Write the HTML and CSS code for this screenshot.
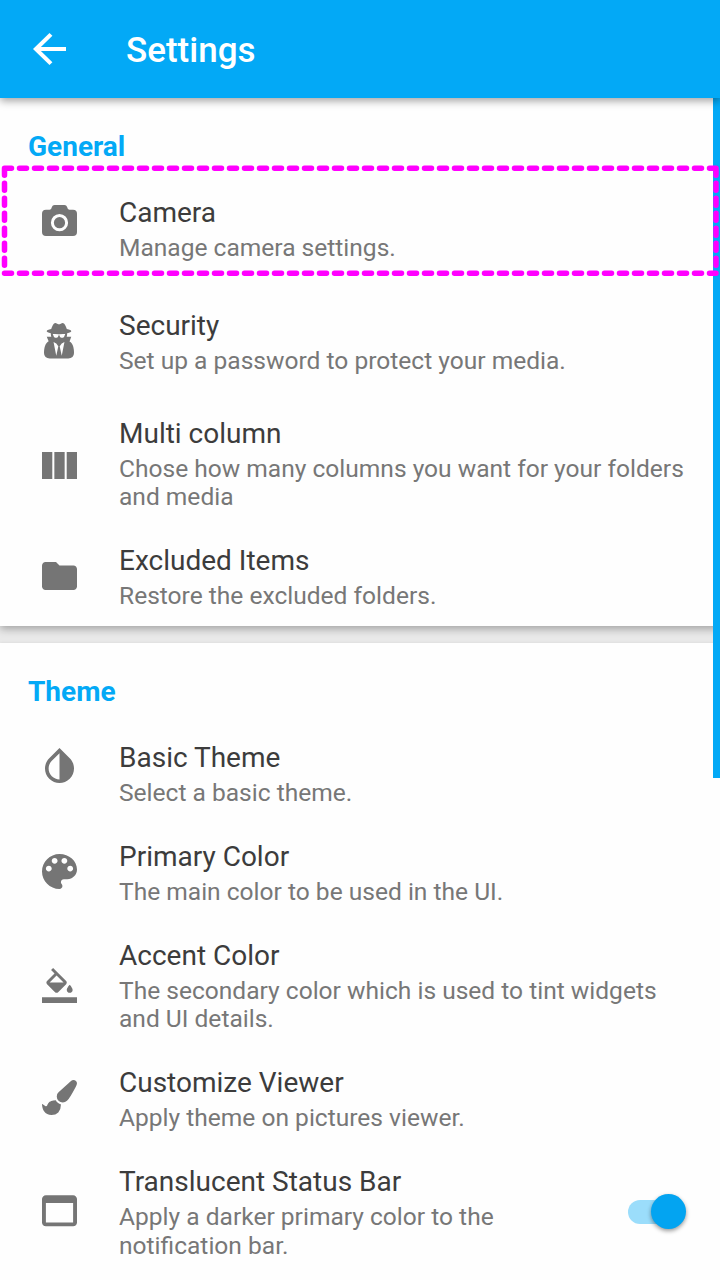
FILE: index.html
```html
<!DOCTYPE html>
<html lang="en">
<head>
<meta charset="utf-8">
<title>Settings</title>
<link rel="stylesheet" href="styles.css">
</head>
<body>
<div class="screen">
  <header class="app-bar">
    <svg class="back" width="33" height="32" viewBox="4 4 16 16" preserveAspectRatio="none"><path d="M20 11H7.83l5.59-5.59L12 4l-8 8 8 8 1.41-1.41L7.83 13H20v-2z"/></svg>
    <h1 class="app-title">Settings</h1>
  </header>
  <main class="content">
    <section class="card card-general">
      <h2 class="heading">General</h2>
      <div class="row row-camera">
        <div class="icon"><svg class="i-camera" width="35" height="31" viewBox="0 0 35 31"><path fill-rule="evenodd" d="M4 4.700h3.600c.9 0 1.400-.3 1.700-1.100l.6-1.600C10.400.7 11.200 0 12.600 0h9.800c1.400 0 2.200.7 2.700 2l.6 1.600c.3.8.8 1.100 1.700 1.100H31a4 4 0 0 1 4 4V27a4 4 0 0 1-4 4H4a4 4 0 0 1-4-4V8.700a4 4 0 0 1 4-4zM17.500 9.100a8.600 8.600 0 1 0 0 17.200 8.600 8.600 0 1 0 0-17.200z"/><circle cx="17.500" cy="17.700" r="5.600"/></svg></div>
        <div class="text"><div class="title">Camera</div><div class="sub">Manage camera settings.</div></div>
      </div>
      <div class="row row-security">
        <div class="icon"><svg class="i-spy" width="30" height="35.500" viewBox="0 0 1408 1664"><path fill-rule="evenodd" d="M576 1536l96-448-96-128-128-64zM832 1536l128-640-128 64-96 128zM992 526q-2-4-4-6-10-8-96-8-70 0-167 19-7 2-21 2t-21-2q-97-19-167-19-86 0-96 8-2 2-4 6 2 18 4 27 2 3 7.500 6.500t7.500 10.500q2 4 7.500 20.500t7 20.500 7.500 17 8.500 17 9 14 12 13.500 14 9.500 17.500 8 20.500 4 24.500 2q36 0 59-12.500t32.500-30 14.500-34.500 11.500-29.500 17.500-12.500h12q11 0 17.500 12.500t11.500 29.500 14.500 34.500 32.500 30 59 12.500q13 0 24.500-2t20.500-4 17.500-8 14-9.500 12-13.500 9-14 8.500-17 7.500-17 7-20.500 7.500-20.500q2-7 7.500-10.500t7.500-6.500q2-9 4-27zM1408 1405q0 121-73 190t-194 69h-874q-121 0-194-69t-73-190q0-61 4.500-118t19-125.500 37.500-123.500 63.500-103.500 93.500-74.500l-90-220h214q-22-64-22-128 0-12 2-32-194-40-194-96 0-57 210-99 17-62 51.500-134t70.500-114q32-37 76-37 30 0 84 31t84 31 84-31 84-31q44 0 76 37 36 42 70.500 114t51.500 134q210 42 210 99 0 56-194 96 7 81-20 160h214l-82 225q63 33 107.500 96.500t65.500 143.500 29 151.500 8 157.500z"/></svg></div>
        <div class="text"><div class="title">Security</div><div class="sub">Set up a password to protect your media.</div></div>
      </div>
      <div class="row">
        <div class="icon"><svg class="i-columns" width="35" height="27" viewBox="4 5 17 13"><path d="M10 18h5V5h-5v13zm-6 0h5V5H4v13zM16 5v13h5V5h-5z"/></svg></div>
        <div class="text"><div class="title">Multi column</div><div class="sub">Chose how many columns you want for your folders<br>and media</div></div>
      </div>
      <div class="row">
        <div class="icon"><svg class="i-folder" width="35" height="28" viewBox="2 4 20 16"><path d="M10 4H4c-1.100 0-1.990.9-1.990 2L2 18c0 1.100.9 2 2 2h16c1.100 0 2-.9 2-2V8c0-1.100-.9-2-2-2h-8l-2-2z"/></svg></div>
        <div class="text"><div class="title">Excluded Items</div><div class="sub">Restore the excluded folders.</div></div>
      </div>
    </section>
    <section class="card card-theme">
      <h2 class="heading">Theme</h2>
      <div class="row">
        <div class="icon"><svg class="i-invert" width="29" height="35" viewBox="4 2.270 16 19.310"><path d="M17.660 7.930L12 2.270 6.340 7.930c-3.120 3.120-3.120 8.190 0 11.310C7.900 20.800 9.950 21.580 12 21.580c2.050 0 4.100-.78 5.660-2.340 3.120-3.120 3.120-8.190 0-11.310zM12 19.590c-1.600 0-3.110-.62-4.240-1.760C6.620 16.690 6 15.190 6 13.590s.62-3.110 1.760-4.240L12 5.100v14.490z"/></svg></div>
        <div class="text"><div class="title">Basic Theme</div><div class="sub">Select a basic theme.</div></div>
      </div>
      <div class="row">
        <div class="icon"><svg class="i-palette" width="35" height="35" viewBox="3 3 18 18"><path d="M12 3c-4.970 0-9 4.030-9 9s4.030 9 9 9c.83 0 1.500-.67 1.500-1.500 0-.39-.15-.74-.39-1.010-.23-.26-.38-.61-.38-.99 0-.83.67-1.500 1.500-1.500H16c2.760 0 5-2.240 5-5 0-4.420-4.030-8-9-8zm-5.500 9c-.83 0-1.500-.67-1.500-1.500S5.670 9 6.500 9 8 9.670 8 10.500 7.330 12 6.500 12zm3-4C8.670 8 8 7.330 8 6.500S8.670 5 9.500 5s1.500.67 1.500 1.500S10.330 8 9.500 8zm5 0c-.83 0-1.500-.67-1.500-1.500S13.670 5 14.500 5s1.500.67 1.500 1.500S15.330 8 14.500 8zm3 4c-.83 0-1.500-.67-1.500-1.500S16.670 9 17.500 9s1.500.67 1.500 1.500-.67 1.500-1.500 1.500z"/></svg></div>
        <div class="text"><div class="title">Primary Color</div><div class="sub">The main color to be used in the UI.</div></div>
      </div>
      <div class="row">
        <div class="icon"><svg class="i-fill" width="35" height="35" viewBox="0 0 24 24"><path d="M16.560 8.940L7.620 0 6.210 1.410l2.380 2.380-5.150 5.150c-.59.59-.59 1.540 0 2.120l5.500 5.500c.29.29.68.44 1.060.44s.77-.15 1.060-.44l5.500-5.500c.59-.58.59-1.530 0-2.120zM5.210 10L10 5.210 14.790 10H5.210zM19 11.500s-2 2.170-2 3.500c0 1.100.9 2 2 2s2-.9 2-2c0-1.330-2-3.500-2-3.500zM0 20h24v4H0v-4z"/></svg></div>
        <div class="text"><div class="title">Accent Color</div><div class="sub">The secondary color which is used to tint widgets<br>and UI details.</div></div>
      </div>
      <div class="row">
        <div class="icon"><svg class="i-brush" width="35" height="35" viewBox="0 0 1792 1792"><path d="M1615 0q70 0 122.500 46.500t52.500 116.500q0 63-45 151-332 629-465 752-97 91-218 91-126 0-216.500-92.500t-90.500-219.500q0-128 92-212l638-579q59-54 130-54zM706 1034q39 76 106.500 130t150.500 76l1 71q4 213-129.500 347t-348.500 134q-123 0-218-46.500t-152.500-127.500-86.500-183-29-220q7 5 41 30t62 44.500 59 36.500 46 17q41 0 55-37 25-66 57.500-112.500t69.500-76 88-47.500 103-25.500 125-10.500z"/></svg></div>
        <div class="text"><div class="title">Customize Viewer</div><div class="sub">Apply theme on pictures viewer.</div></div>
      </div>
      <div class="row">
        <div class="icon"><svg class="i-window" width="35" height="31.500" viewBox="3 4 18 16"><path d="M19 4H5c-1.110 0-2 .9-2 2v12c0 1.100.89 2 2 2h14c1.100 0 2-.9 2-2V6c0-1.100-.89-2-2-2zm0 14H5V8h14v10z"/></svg></div>
        <div class="text"><div class="title">Translucent Status Bar</div><div class="sub">Apply a darker primary color to the<br>notification bar.</div></div>
        <div class="switch"><div class="thumb"></div></div>
      </div>
    </section>
    <div class="scrollbar"></div>
  </main>
  <svg class="highlight" width="720" height="115" viewBox="0 0 720 115"><path d="M4.500 5.300H716M4.500 110.300H716M4.500 5.300V110.300M716 5.300V110.300"/></svg>
</div>
</body>
</html>
```
FILE: styles.css
```css
* { box-sizing: border-box; }
body {
  margin: 0;
  background: #e9e9e9;
  font-family: Roboto, "Liberation Sans", sans-serif;
}
h1, h2 { margin: 0; }
.screen {
  position: relative;
  width: 720px;
  height: 1280px;
  overflow: hidden;
}
.app-bar {
  position: relative;
  z-index: 2;
  display: flex;
  align-items: center;
  height: 98px;
  padding-left: 33px;
  background: #03a9f6;
  box-shadow: 0 3px 8px rgba(0, 0, 0, .36);
}
.back { fill: #fff; }
.app-title {
  margin-left: 60px;
  padding-top: 3px;
  font-size: 35px;
  line-height: 40px;
  font-weight: 500;
  color: #fff;
}
.content { position: relative; }
.card {
  background: #fefefe;
  padding-top: 32px;
}
.card-general {
  position: relative;
  height: 528px;
  box-shadow: 0 3px 8px rgba(0, 0, 0, .3);
}
.card-theme {
  margin-top: 17px;
  height: 660px;
  box-shadow: 0 0 3px rgba(0, 0, 0, .08);
}
.heading {
  margin: 0 0 17px 28px;
  font-size: 28px;
  line-height: 33px;
  font-weight: 700;
  color: #03a9f6;
}
.row {
  display: flex;
  align-items: flex-start;
  padding: 16px 0 16.600px;
}
.row-camera { margin-bottom: 14px; }
.row-security { margin-bottom: 9px; }
.icon {
  display: flex;
  justify-content: center;
  width: 119px;
  flex: none;
  fill: #757575;
}
.text { flex: 1; white-space: nowrap; }
.title {
  font-size: 28px;
  line-height: 33px;
  color: #3c3c3c;
}
.sub {
  margin-top: 5px;
  font-size: 24.550px;
  line-height: 28.400px;
  color: #777;
}
.i-camera { margin-top: 9px; }
.i-spy { margin: 14px 1px 0 0; }
.i-columns { margin-top: 34.500px; }
.i-folder { margin-top: 18px; }
.i-invert { margin-top: 7px; }
.i-palette { margin-top: 14px; }
.i-fill { margin-top: 28.500px; }
.i-brush { margin-top: 14px; }
.i-window { margin-top: 30px; }
.switch {
  display: flex;
  justify-content: flex-end;
  align-items: center;
  width: 58px;
  height: 24px;
  margin: 34.200px 34px 0 0;
  border-radius: 12px;
  background: linear-gradient(#9bddfb, #9bddfb) left / 46px 24px no-repeat;
}
.thumb {
  flex: none;
  width: 35px;
  height: 35px;
  border-radius: 50%;
  background: #03a4f1;
  box-shadow: 0 2px 4px rgba(0, 0, 0, .4);
}
.scrollbar {
  position: absolute;
  top: 0;
  right: 0;
  width: 7px;
  height: 680px;
  background: #03a9f6;
}
.highlight {
  position: absolute;
  z-index: 3;
  left: 0;
  top: 163px;
  fill: none;
  stroke: #f0f;
  stroke-width: 5.500;
  stroke-linecap: round;
  stroke-dasharray: 7 8;
}
```
